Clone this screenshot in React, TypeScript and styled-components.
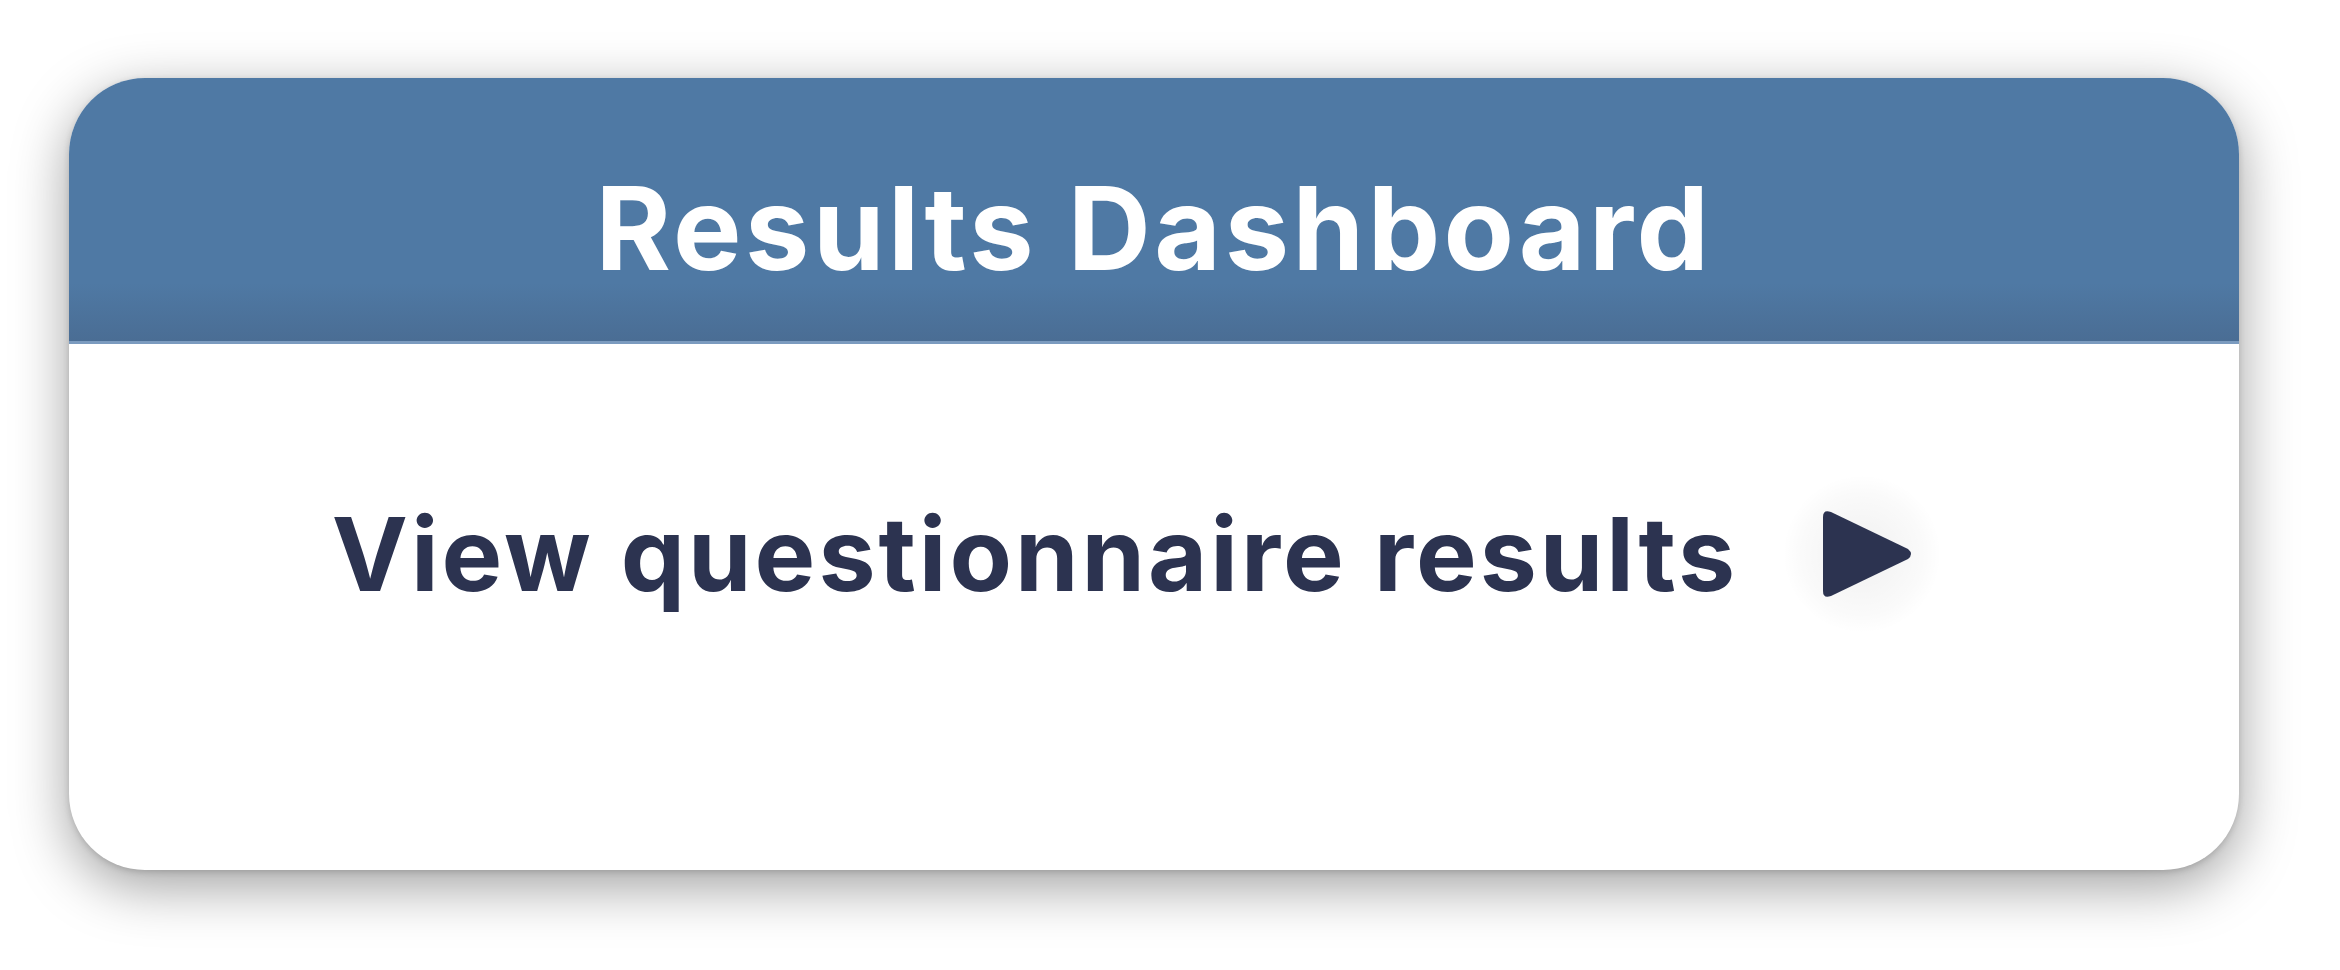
import React from "react";
import styled, { createGlobalStyle } from "styled-components";

const Global = createGlobalStyle`
  html, body { margin: 0; padding: 0; background: #ffffff; }
  body { font-family: Inter, "Noto Sans", sans-serif; }
`;

const Page = styled.div`
  width: 2340px;
  height: 970px;
  box-sizing: border-box;
  padding: 78px 101px 0 69px;
  background: #ffffff;
`;

const Card = styled.div`
  width: 2170px;
  height: 792px;
  border-radius: 76px;
  overflow: hidden;
  background: #ffffff;
  display: flex;
  flex-direction: column;
  box-shadow: 0 16px 56px rgba(0, 0, 0, 0.38), 0 2px 6px rgba(0, 0, 0, 0.15);
`;

const Header = styled.div`
  height: 263px;
  flex: none;
  display: flex;
  align-items: center;
  justify-content: center;
  background: linear-gradient(180deg, #4f79a4 0%, #4f79a4 78%, #4a6d94 100%);
  border-bottom: 3px solid #7b9bbf;
`;

const Title = styled.h1`
  margin: 0;
  font-family: Inter, "Noto Sans", sans-serif;
  font-weight: 700;
  font-size: 115px;
  color: #ffffff;
  letter-spacing: 3.5px;
  line-height: 1;
  padding-top: 38px;
`;

const Body = styled.div`
  flex: 1;
  display: flex;
  justify-content: center;
  padding-top: 150px;
`;

const Row = styled.div`
  display: flex;
  align-items: center;
  gap: 46px;
  height: 120px;
  margin-right: 36px;
`;

const Label = styled.span`
  font-family: Inter, "Noto Sans", sans-serif;
  font-weight: 700;
  font-size: 102px;
  color: #2c3350;
  letter-spacing: 3px;
  line-height: 1;
`;

const PlayButton = styled.button`
  width: 156px;
  height: 156px;
  border: none;
  border-radius: 50%;
  background: radial-gradient(circle, rgba(0,0,0,0.06) 0%, rgba(0,0,0,0.02) 55%, rgba(255,255,255,0) 72%);
  display: flex;
  align-items: center;
  justify-content: center;
  padding: 0 0 0 10px;
  cursor: pointer;
`;

export default function App() {
  return (
    <>
      <Global />
      <Page>
        <Card>
          <Header>
            <Title>Results Dashboard</Title>
          </Header>
          <Body>
            <Row>
              <Label>View questionnaire results</Label>
              <PlayButton aria-label="View results">
                <svg width="96" height="92" viewBox="0 0 96 92">
                  <path
                    d="M4 9 Q4 1 12 4 L89 41 Q95 46 89 51 L12 88 Q4 91 4 83 Z"
                    fill="#2c3350"
                  />
                </svg>
              </PlayButton>
            </Row>
          </Body>
        </Card>
      </Page>
    </>
  );
}
